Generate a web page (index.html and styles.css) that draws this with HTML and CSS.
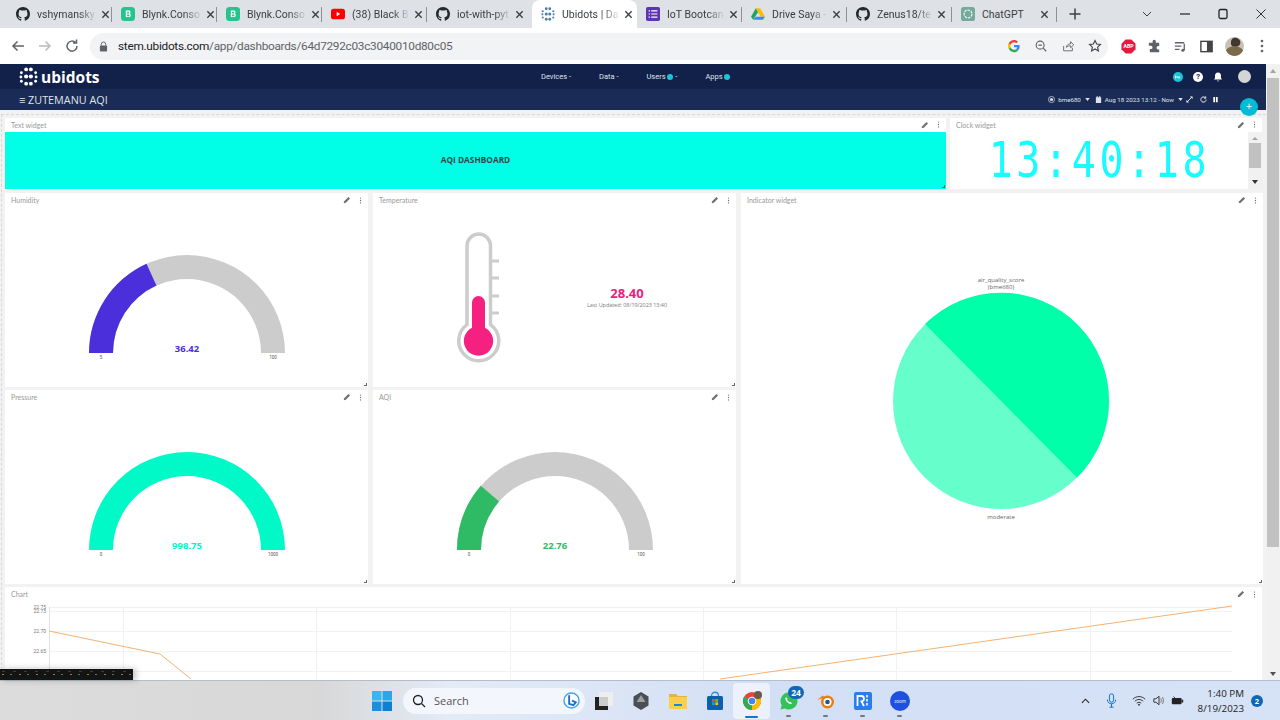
FILE: index.html
```html
<!DOCTYPE html>
<html lang="en">
<head>
  <meta charset="UTF-8" />
  <title>Ubidots | Dashboard</title>
  <link rel="stylesheet" href="styles.css">
</head>
<body>
  <svg class="defs" width="0" height="0">
    <symbol id="gh" viewBox="0 0 16 16"><path d="M8 0C3.58 0 0 3.58 0 8c0 3.54 2.29 6.53 5.47 7.59.4.07.55-.17.55-.38 0-.19-.01-.82-.01-1.49-2.01.37-2.53-.49-2.69-.94-.09-.23-.48-.94-.82-1.13-.28-.15-.68-.52-.01-.53.63-.01 1.08.58 1.23.82.72 1.21 1.87.87 2.33.66.07-.52.28-.87.51-1.07-1.78-.2-3.64-.89-3.64-3.95 0-.87.31-1.59.82-2.15-.08-.2-.36-1.02.08-2.12 0 0 .67-.21 2.2.82.64-.18 1.32-.27 2-.27.68 0 1.36.09 2 .27 1.53-1.04 2.2-.82 2.2-.82.44 1.1.16 1.92.08 2.12.51.56.82 1.27.82 2.15 0 3.07-1.87 3.75-3.65 3.95.29.25.54.73.54 1.48 0 1.07-.01 1.93-.01 2.2 0 .21.15.46.55.38A8.013 8.013 0 0016 8c0-4.42-3.58-8-8-8z" fill="#24292e"/></symbol>
    <symbol id="blynk" viewBox="0 0 16 16"><rect width="16" height="16" rx="4" fill="#23c48e"/><path d="M5.5 4h3.2c1.5 0 2.2.8 2.2 1.9 0 .8-.4 1.3-1 1.6.8.2 1.3.9 1.3 1.8 0 1.4-1 2.2-2.5 2.2H5.5zM7 5.3v2h1.4c.6 0 1-.4 1-1s-.4-1-1-1zM7 8.5v2.2h1.6c.7 0 1.1-.4 1.1-1.1s-.4-1.1-1.1-1.1z" fill="#fff"/></symbol>
    <symbol id="close" viewBox="0 0 10 10"><path d="M1.5 1.5l7 7M8.5 1.5l-7 7" stroke="#3c4043" stroke-width="1.5" fill="none"/></symbol>
    <symbol id="pencil" viewBox="0 0 10 10"><path d="M1 9l.5-2.5L6.8 1.2l2 2L3.5 8.500z" fill="#707070"/></symbol>
    <symbol id="dots" viewBox="0 0 4 10"><circle cx="2" cy="1.5" r=".9" fill="#707070"/><circle cx="2" cy="5" r=".9" fill="#707070"/><circle cx="2" cy="8.5" r=".9" fill="#707070"/></symbol>
    <symbol id="ubi" viewBox="0 0 20 20"><g fill="currentColor"><circle cx="7.5" cy="2.5" r="2"/><circle cx="12.5" cy="2.5" r="2"/><circle cx="2.5" cy="6" r="1.5"/><circle cx="17.5" cy="6" r="1.5"/><circle cx="2" cy="10.500" r="1.500"/><circle cx="7.500" cy="10" r="2.200"/><circle cx="12.500" cy="10" r="2.200"/><circle cx="18" cy="10.500" r="1.500"/><circle cx="2.500" cy="15" r="1.500"/><circle cx="17.500" cy="15" r="1.500"/><circle cx="7.500" cy="17.500" r="2"/><circle cx="12.500" cy="17.500" r="2"/></g></symbol>
  </svg>

  <div class="tabstrip">
    <div class="tab"><svg class="fav"><use href="#gh"/></svg><span class="tab-title">vshymansky</span><svg class="tab-x"><use href="#close"/></svg></div>
    <div class="tab"><svg class="fav"><use href="#blynk"/></svg><span class="tab-title">Blynk.Conso</span><svg class="tab-x"><use href="#close"/></svg></div>
    <div class="tab"><svg class="fav"><use href="#blynk"/></svg><span class="tab-title">Blynk.Conso</span><svg class="tab-x"><use href="#close"/></svg></div>
    <div class="tab"><svg class="fav" viewBox="0 0 16 16"><rect y="2" width="16" height="12" rx="3" fill="#f00"/><path d="M6.500 5.500v5l4-2.500z" fill="#fff"/></svg><span class="tab-title">(38) Black B</span><svg class="tab-x"><use href="#close"/></svg></div>
    <div class="tab"><svg class="fav"><use href="#gh"/></svg><span class="tab-title">iot-with-pyt</span><svg class="tab-x"><use href="#close"/></svg></div>
    <div class="tab active"><svg class="fav ubi-fav"><use href="#ubi"/></svg><span class="tab-title">Ubidots | Da</span><svg class="tab-x"><use href="#close"/></svg></div>
    <div class="tab"><svg class="fav" viewBox="0 0 16 16"><rect width="16" height="16" rx="2" fill="#5e35b1"/><path d="M3 4.500h1.500M6 4.500h7M3 8h1.500M6 8h7M3 11.500h1.500M6 11.500h7" stroke="#fff" stroke-width="1.300"/></svg><span class="tab-title">IoT Bootcan</span><svg class="tab-x"><use href="#close"/></svg></div>
    <div class="tab"><svg class="fav" viewBox="0 0 16 16"><path d="M5.500 1.500h5L16 11h-5z" fill="#fbbc04"/><path d="M5.500 1.500L0 11l2.500 3.500L8 6z" fill="#1fa463"/><path d="M2.500 14.500h11L16 11H5.500z" fill="#4285f4"/></svg><span class="tab-title">Drive Saya -</span><svg class="tab-x"><use href="#close"/></svg></div>
    <div class="tab"><svg class="fav"><use href="#gh"/></svg><span class="tab-title">Zenus18/te</span><svg class="tab-x"><use href="#close"/></svg></div>
    <div class="tab"><svg class="fav" viewBox="0 0 16 16"><rect width="16" height="16" rx="3" fill="#74aa9c"/><circle cx="8" cy="8" r="4.500" fill="none" stroke="#fff" stroke-width="1.200" stroke-dasharray="3 1"/></svg><span class="tab-title plain">ChatGPT</span><svg class="tab-x"><use href="#close"/></svg></div>
    <svg class="new-tab" viewBox="0 0 12 12"><path d="M6 .5v11M.5 6h11" stroke="#3c4043" stroke-width="1.500"/></svg>
    <div class="win-btns">
      <svg viewBox="0 0 12 12"><path d="M2 4l4 4 4-4" stroke="#3c4043" fill="none"/></svg>
      <svg viewBox="0 0 12 12"><path d="M1 6h10" stroke="#222" stroke-width="1.200"/></svg>
      <svg viewBox="0 0 12 12"><rect x="2" y="1.500" width="8" height="9" rx="1.500" fill="none" stroke="#222" stroke-width="1.300"/></svg>
      <svg viewBox="0 0 12 12"><path d="M1.500 1.500l9 9M10.500 1.500l-9 9" stroke="#333"/></svg>
    </div>
  </div>

  <div class="toolbar">
    <svg class="tb-ico" viewBox="0 0 16 16"><path d="M14 8H3M7.500 3.500L3 8l4.500 4.500" stroke="#5f6368" stroke-width="1.500" fill="none"/></svg>
    <svg class="tb-ico" viewBox="0 0 16 16"><path d="M2 8h11M8.500 3.500L13 8l-4.500 4.500" stroke="#b9bcc0" stroke-width="1.500" fill="none"/></svg>
    <svg class="tb-ico" viewBox="0 0 16 16"><path d="M13 8a5 5 0 1 1-1.500-3.500M12.500 1.500v3.500H9" stroke="#5f6368" stroke-width="1.500" fill="none"/></svg>
    <div class="omnibox">
      <svg class="lock" viewBox="0 0 10 12"><path d="M2.500 5V3.500a2.500 2.500 0 0 1 5 0V5" stroke="#5f6368" fill="none"/><rect x="1" y="5" width="8" height="6.500" rx="1" fill="#5f6368"/></svg>
      <span class="url"><b>stem.ubidots.com</b>/app/dashboards/64d7292c03c3040010d80c05</span>
      <div class="omni-right">
        <svg viewBox="0 0 16 16"><path d="M14.500 8.200c0-.5 0-1-.1-1.400H8v2.700h3.700c-.2.900-.7 1.600-1.400 2.100l2.200 1.700c1.300-1.200 2-3 2-5.100z" fill="#4285f4"/><path d="M8 15c1.900 0 3.400-.6 4.500-1.700l-2.200-1.700c-.6.400-1.400.7-2.300.7-1.800 0-3.300-1.200-3.800-2.800L1.900 11.200C3 13.500 5.300 15 8 15z" fill="#34a853"/><path d="M4.200 9.500C4 9 4 8.500 4 8s.1-1 .2-1.500L1.900 4.800C1.300 5.800 1 6.900 1 8s.3 2.200.9 3.200z" fill="#fbbc04"/><path d="M8 3.800c1 0 1.900.4 2.600 1l1.900-1.900C11.400 1.700 9.900 1 8 1 5.300 1 3 2.500 1.900 4.800l2.300 1.700C4.700 5 6.200 3.800 8 3.800z" fill="#ea4335"/></svg>
        <svg viewBox="0 0 16 16"><circle cx="7" cy="7" r="4.500" stroke="#5f6368" stroke-width="1.300" fill="none"/><path d="M10.500 10.500l3.500 3.500M5 7h4" stroke="#5f6368" stroke-width="1.300"/></svg>
        <svg viewBox="0 0 16 16"><path d="M3 8v5.500h10V10M6 9.500c.5-2.500 2.500-4 5-4V3l3.500 3.700L11 10V7.800c-2 0-3.800.4-5 1.700z" stroke="#5f6368" fill="none"/></svg>
        <svg viewBox="0 0 16 16"><path d="M8 1.800l1.900 4 4.300.5-3.200 3 .9 4.300L8 11.400l-3.900 2.200.9-4.300-3.200-3 4.300-.5z" stroke="#444" stroke-width="1.300" fill="none"/></svg>
      </div>
    </div>
    <div class="ext">
      <svg viewBox="0 0 16 16"><path d="M5 .5h6L15.500 5v6L11 15.500H5L.5 11V5z" fill="#e8173f"/><text x="8" y="10" class="abp">ABP</text></svg>
      <svg viewBox="0 0 16 16"><path d="M6 2.500a1.700 1.700 0 0 1 3.400 0V4H13v3.500h-1a1.800 1.800 0 0 0 0 3.600h1V14H3v-3.300h1.200a1.700 1.700 0 0 0 0-3.400H2V4h4z" fill="#5f6368"/></svg>
      <svg viewBox="0 0 16 16"><path d="M2 4h10M2 7.500h7M2 11h5M12 5v7" stroke="#5f6368" stroke-width="1.400" fill="none"/><circle cx="10.500" cy="12" r="1.600" fill="#5f6368"/></svg>
      <svg viewBox="0 0 16 16"><rect x="2" y="2.500" width="12" height="11" fill="none" stroke="#444" stroke-width="1.500"/><rect x="8.500" y="2.500" width="5.500" height="11" fill="#444"/></svg>
      <svg class="me" viewBox="0 0 20 20"><circle cx="10" cy="10" r="10" fill="#c9c2b4"/><path d="M9 1c4-1 8 2 7 6-1 3-5 4-8 3-3-2-2-8 1-9z" fill="#43362c"/><path d="M1 14c3-5 14-6 18 0-2 4-5 6-9 6s-7-2-9-6z" fill="#7a6a4a"/></svg>
      <svg class="kebab" viewBox="0 0 4 14"><circle cx="2" cy="2" r="1.300" fill="#5f6368"/><circle cx="2" cy="7" r="1.300" fill="#5f6368"/><circle cx="2" cy="12" r="1.300" fill="#5f6368"/></svg>
    </div>
  </div>

  <div class="viewport">
    <div class="app">
      <div class="nav">
        <div class="brand"><svg class="brand-ico"><use href="#ubi"/></svg><span>ubidots</span></div>
        <div class="menu">
          <span>Devices -</span><span>Data -</span><span>Users <i class="dot"></i> -</span><span>Apps <i class="dot"></i></span>
        </div>
        <div class="nav-right">
          <svg class="nav-ico" viewBox="0 0 10 10"><circle cx="5" cy="5" r="5" fill="#1cc4d8"/><path d="M2.500 3.500v3M2.500 5H7M6 5v1.500" stroke="#fff" stroke-width=".9" fill="none"/></svg>
          <i class="round help">?</i>
          <svg class="bell" viewBox="0 0 10 10"><path d="M5 .5c2 0 3 1.500 3 3.500v2l1 1.500H1L2 6V4C2 2 3 .5 5 .5zM4 8.500h2L5 9.700z" fill="#fff"/></svg>
          <i class="round user"></i>
        </div>
      </div>
      <div class="subnav">
        <span class="dash-name">≡ ZUTEMANU AQI</span>
        <div class="sub-right">
          <svg class="sub-ico" viewBox="0 0 8 8"><circle cx="4" cy="4" r="3.500" fill="none" stroke="#dfe3ec" stroke-width=".8"/><circle cx="4" cy="4" r="1.800" fill="#dfe3ec"/></svg>
          <span class="sub-device">bme680</span>
          <svg class="sub-caret" viewBox="0 0 6 4"><path d="M0 0h6L3 4z" fill="#dfe3ec"/></svg>
          <svg class="sub-ico sub-cal" viewBox="0 0 8 8"><path d="M1 1.500h6V8H1zM2 0h1v2H2zM5 0h1v2H5z" fill="#dfe3ec"/></svg>
          <span>Aug 18 2023 13:12 - Now</span>
          <svg class="sub-caret" viewBox="0 0 6 4"><path d="M0 0h6L3 4z" fill="#dfe3ec"/></svg>
          <svg class="sub-ico sub-expand" viewBox="0 0 8 8"><path d="M4.500 0.500h3v3zM3.500 7.500h-3v-3z" fill="#fff"/><path d="M6 2L2 6" stroke="#fff"/></svg>
          <svg class="sub-ico sub-gap" viewBox="0 0 8 8"><path d="M7 4a3 3 0 1 1-1-2.200M6.500.5v2H4.500" stroke="#fff" fill="none"/></svg>
          <svg class="sub-ico sub-pause" viewBox="0 0 8 8"><path d="M1.500 1h2v6h-2zM4.500 1h2v6h-2z" fill="#fff"/></svg>
        </div>
      </div>
      <button class="fab">+</button>

      <div class="dashboard">
        <div class="row-top">
          <div class="card card-text">
            <div class="card-head"><span>Text widget</span><div class="tools"><svg class="pen"><use href="#pencil"/></svg><svg class="more"><use href="#dots"/></svg></div></div>
            <div class="banner">AQI DASHBOARD</div>
            <i class="grip"></i>
          </div>
          <div class="card card-clock">
            <div class="card-head"><span>Clock widget</span><div class="tools"><svg class="pen"><use href="#pencil"/></svg><svg class="more"><use href="#dots"/></svg></div></div>
            <div class="clock-body">
              <div class="clock-wrap"><span class="clock">13:40:18</span></div>
              <div class="mini-scroll"><i class="up"></i><i class="thumb"></i><i class="down"></i></div>
            </div>
          </div>
        </div>

        <div class="row-mid">
          <div class="gauges">
            <div class="card">
              <div class="card-head"><span>Humidity</span><div class="tools"><svg class="pen"><use href="#pencil"/></svg><svg class="more"><use href="#dots"/></svg></div></div>
              <svg class="gauge" viewBox="0 0 363 178">
                <path class="arc-bg" d="M84 144A98 98 0 0 1 280 144H256A74 74 0 0 0 108 144Z"/>
                <path fill="#4a2fdb" d="M84 144A98 98 0 0 1 141.500 54.700L151.400 76.600A74 74 0 0 0 108 144Z"/>
                <text class="g-val" x="182" y="143" fill="#4a2fdb">36.42</text>
                <text class="g-lim" x="96" y="150">5</text><text class="g-lim" x="268" y="150">100</text>
              </svg>
              <i class="grip"></i>
            </div>
            <div class="card">
              <div class="card-head"><span>Temperature</span><div class="tools"><svg class="pen"><use href="#pencil"/></svg><svg class="more"><use href="#dots"/></svg></div></div>
              <svg class="gauge" viewBox="0 0 363 178">
                <path d="M119 52h7M119 69h7M119 87h7M119 104h7" stroke="#ccc" stroke-width="3"/>
                <path d="M94 115.600V36.750a11.750 11.750 0 0 1 23.500 0V115.600a20 20 0 1 1-23.500 0Z" fill="#fff" stroke="#ccc" stroke-width="3.500"/>
                <path d="M99 118.800V93.500a6.500 6.500 0 0 1 13 0V118.800a14.700 14.700 0 1 1-13 0Z" fill="#f5207f"/>
                <text class="t-val" x="254" y="89">28.40</text>
                <text class="t-sub" x="254" y="98">Last Updated: 08/19/2023 13:40</text>
              </svg>
              <i class="grip"></i>
            </div>
            <div class="card">
              <div class="card-head"><span>Pressure</span><div class="tools"><svg class="pen"><use href="#pencil"/></svg><svg class="more"><use href="#dots"/></svg></div></div>
              <svg class="gauge" viewBox="0 0 363 178">
                <path fill="#00f9c6" d="M84 144A98 98 0 0 1 280 144H256A74 74 0 0 0 108 144Z"/>
                <text class="g-val" x="182" y="143" fill="#00f9c6">998.75</text>
                <text class="g-lim" x="96" y="150">0</text><text class="g-lim" x="268" y="150">1000</text>
              </svg>
              <i class="grip"></i>
            </div>
            <div class="card">
              <div class="card-head"><span>AQI</span><div class="tools"><svg class="pen"><use href="#pencil"/></svg><svg class="more"><use href="#dots"/></svg></div></div>
              <svg class="gauge" viewBox="0 0 363 178">
                <path class="arc-bg" d="M84 144A98 98 0 0 1 280 144H256A74 74 0 0 0 108 144Z"/>
                <path fill="#2fbb66" d="M84 144A98 98 0 0 1 107.800 79.700L126.100 95.500A74 74 0 0 0 108 144Z"/>
                <text class="g-val" x="182" y="143" fill="#2fbb66">22.76</text>
                <text class="g-lim" x="96" y="150">0</text><text class="g-lim" x="268" y="150">100</text>
              </svg>
              <i class="grip"></i>
            </div>
          </div>
          <div class="card card-pie">
            <div class="card-head"><span>Indicator widget</span><div class="tools"><svg class="pen"><use href="#pencil"/></svg><svg class="more"><use href="#dots"/></svg></div></div>
            <svg class="pie" viewBox="0 0 522 375">
              <circle cx="260" cy="194" r="108" fill="#66ffcc"/>
              <path d="M184 117A108 108 0 0 1 336 270.500Z" fill="#00ffa9"/>
              <text class="pie-txt" x="260" y="75">air_quality_score</text>
              <text class="pie-txt" x="260" y="82">(bme680)</text>
              <text class="pie-txt" x="260" y="312">moderate</text>
            </svg>
            <i class="grip"></i>
          </div>
        </div>

        <div class="card card-chart">
          <div class="card-head"><span>Chart</span><div class="tools"><svg class="pen"><use href="#pencil"/></svg><svg class="more"><use href="#dots"/></svg></div></div>
          <svg class="chart" viewBox="0 0 1257 80">
            <g stroke="#f2f2f2" shape-rendering="crispEdges">
              <path d="M44 6H1227M44 10H1227M44 30H1227M44 50H1227M44 70H1227"/>
              <path d="M118 6V80M311 6V80M505 6V80M698 6V80M891 6V80M1085 6V80"/>
            </g>
            <path d="M44 6V80" stroke="#e2e2e2" shape-rendering="crispEdges"/>
            <path d="M44 30L155 53L186 78M715 78L1227 5" stroke="#f3b274" fill="none"/>
            <text class="axis" x="41" y="8">22.75</text>
            <text class="axis" x="41" y="12">22.73</text>
            <text class="axis" x="41" y="32">22.70</text>
            <text class="axis" x="41" y="52">22.65</text>
          </svg>
        </div>
      </div>
    </div>
    <div class="page-scroll"><i class="ps-up"></i><i class="ps-thumb"></i><i class="ps-down"></i></div>
    <div class="stray-thumb"></div>
  </div>

  <div class="taskbar">
    <svg class="start" viewBox="0 0 20 20"><g fill="#1a9be6"><rect width="9.500" height="9.500" fill="#38b5f2"/><rect x="10.500" width="9.500" height="9.500" fill="#2aa6ec"/><rect y="10.500" width="9.500" height="9.500" fill="#1a8fdf"/><rect x="10.500" y="10.500" width="9.500" height="9.500" fill="#0f7fd4"/></g></svg>
    <div class="search">
      <svg viewBox="0 0 14 14"><circle cx="6" cy="6" r="4.500" fill="none" stroke="#222" stroke-width="1.300"/><path d="M9.500 9.500l3.500 3.500" stroke="#222" stroke-width="1.300"/></svg>
      <span>Search</span>
      <svg class="bing" viewBox="0 0 18 18"><circle cx="9" cy="9" r="8" fill="#fff" stroke="#4aa3e8" stroke-width="1.500"/><path d="M6.500 3.500v9l4.500 1.500 2.500-3-4-2" fill="none" stroke="#1b70c9" stroke-width="2"/></svg>
    </div>
    <div class="apps">
      <div class="app-ico"><svg viewBox="0 0 20 20"><rect x="5" y="1" width="14" height="14" fill="#eee"/><rect x="1" y="6" width="13" height="13" fill="#222"/><rect x="5" y="6" width="9" height="9" fill="#ccc"/></svg></div>
      <div class="app-ico"><svg viewBox="0 0 20 20"><path d="M10 1l7.500 4.500v9L10 19l-7.500-4.500v-9z" fill="#4a4f55"/><path d="M10 4l4.500 7h-9z" fill="#9aa0a6"/></svg></div>
      <div class="app-ico"><svg viewBox="0 0 20 20"><path d="M1 3h7l2 2h9v3H1z" fill="#e8b33a"/><rect x="1" y="6" width="18" height="12" fill="#fbcf4b"/><rect x="6" y="13" width="8" height="2" fill="#1a86d8"/></svg></div>
      <div class="app-ico"><svg viewBox="0 0 20 20"><rect x="2" y="5" width="16" height="14" rx="1.500" fill="#0c5fa8"/><path d="M6.500 5c0-5 7-5 7 0" fill="none" stroke="#2a8fd8" stroke-width="1.300"/><rect x="7" y="8" width="2.800" height="2.800" fill="#f25022"/><rect x="10.300" y="8" width="2.800" height="2.800" fill="#7fba00"/><rect x="7" y="11.300" width="2.800" height="2.800" fill="#00a4ef"/><rect x="10.300" y="11.300" width="2.800" height="2.800" fill="#ffb900"/></svg></div>
      <div class="app-ico on"><svg viewBox="0 0 20 20"><circle cx="10" cy="10" r="9" fill="#ea4335"/><path d="M10 10L17.800 5.500A9 9 0 0 1 10 19z" fill="#fbbc04"/><path d="M10 10V19A9 9 0 0 1 2.200 5.500z" fill="#34a853"/><circle cx="10" cy="10" r="4.300" fill="#fff"/><circle cx="10" cy="10" r="3.300" fill="#4285f4"/><circle cx="16" cy="4" r="4" fill="#6b5a4a"/></svg></div>
      <div class="app-ico run"><svg viewBox="0 0 20 20"><path d="M10 1.500a8.500 8.500 0 0 0-7.300 12.800L1.500 18.500l4.300-1.100A8.500 8.500 0 1 0 10 1.500z" fill="#33c25a"/><path d="M7 6c-1 1-1 3 1 5s4 2.500 5 1.500l-1.500-1.800-1.200.6-2.300-2.300.6-1.200z" fill="#fff"/></svg><b class="badge">24</b></div>
      <div class="app-ico run"><svg viewBox="0 0 20 20"><circle cx="11.500" cy="11" r="6.500" fill="#e87d0d"/><circle cx="11.500" cy="11" r="4" fill="#fff"/><circle cx="11.500" cy="11" r="2.300" fill="#265787"/><path d="M1 9l6-4.500 1.500 2z" fill="#e87d0d"/></svg></div>
      <div class="app-ico run"><svg viewBox="0 0 20 20"><rect x="1" y="1" width="18" height="18" rx="2" fill="#2b7de9"/><path d="M4.500 15V5h3.500a2.700 2.700 0 0 1 .5 5.400L11 15" stroke="#fff" stroke-width="1.800" fill="none"/><path d="M14 4v12" stroke="#cfe3fb" stroke-width="2" stroke-dasharray="2.500 1.500"/></svg></div>
      <div class="app-ico run"><svg viewBox="0 0 20 20"><circle cx="10" cy="10" r="10" fill="#1f4fe0"/><text x="10" y="12" class="zoom-txt">zoom</text></svg></div>
    </div>
    <div class="tray">
      <svg class="t-chev" viewBox="0 0 10 6"><path d="M1 5l4-4 4 4" stroke="#222" stroke-width="1.200" fill="none"/></svg>
      <svg class="t-mic" viewBox="0 0 12 18"><rect x="3.500" y="1" width="5" height="10" rx="2.500" fill="none" stroke="#1673c9" stroke-width="1.200"/><path d="M1 8a5 5 0 0 0 10 0M6 13v4M3.500 17h5" stroke="#1673c9" stroke-width="1.200" fill="none"/></svg>
      <svg class="t-wifi" viewBox="0 0 16 12"><path d="M1 4.500c4-4 10-4 14 0M3.200 6.800c3-2.600 6.600-2.600 9.600 0M5.400 9c1.600-1.300 3.600-1.300 5.200 0" stroke="#222" fill="none"/><circle cx="8" cy="10.800" r="1" fill="#222"/></svg>
      <svg class="t-vol" viewBox="0 0 14 12"><path d="M1 4h2.500L7 1v10L3.500 8H1z" fill="none" stroke="#222"/><path d="M9 3.500c1 1.500 1 3.500 0 5M11 2c1.500 2.500 1.500 5.500 0 8" stroke="#666" fill="none"/></svg>
      <svg class="t-bat" viewBox="0 0 16 12"><rect x="1" y="3" width="12" height="7.500" rx="1" fill="#222"/><rect x="13" y="5" width="2" height="3.500" fill="#222"/><path d="M3 1l3 3-2 1" stroke="#222" fill="none"/></svg>
      <div class="time"><span>1:40 PM</span><span>8/19/2023</span></div>
      <b class="notif">2</b>
    </div>
  </div>
</body>
</html>
```

FILE: styles.css
```css
* {
  box-sizing: border-box;
}

html, body {
  margin: 0;
  height: 720px;
  overflow: hidden;
}

body {
  font-family: "Roboto", sans-serif;
  display: flex;
  flex-direction: column;
  background: #fff;
}

i, b {
  font-style: normal;
}

.defs {
  position: absolute;
}

/* browser chrome */
.tabstrip {
  height: 28px;
  flex: none;
  display: flex;
  align-items: center;
  background: #dee1e6;
  padding-left: 7px;
}

.tab {
  width: 105px;
  height: 28px;
  flex: none;
  display: flex;
  align-items: center;
  padding: 0 8px 0 9px;
  font-size: 10.500px;
  color: #3c4043;
  position: relative;
}

.tab::after {
  content: "";
  position: absolute;
  right: 0;
  top: 7px;
  height: 15px;
  border-right: 1px solid #8e9196;
}

.tab.active {
  background: #fff;
  border-radius: 8px 8px 0 0;
}

.tab.active::after,
.tab:nth-child(5)::after {
  display: none;
}

.fav {
  width: 14px;
  height: 14px;
  flex: none;
  margin-right: 7px;
}

.ubi-fav {
  color: #4a7fb0;
}

.tab-title {
  flex: 1;
  white-space: nowrap;
  -webkit-mask-image: linear-gradient(90deg, #000 72%, rgba(0, 0, 0, .12));
  mask-image: linear-gradient(90deg, #000 72%, rgba(0, 0, 0, .12));
}

.tab-title.plain {
  -webkit-mask-image: none;
  mask-image: none;
}

.tab-x {
  width: 9px;
  height: 9px;
  flex: none;
  margin-left: 6px;
}

.new-tab {
  width: 12px;
  height: 12px;
  margin-left: 12px;
}

.win-btns {
  margin-left: auto;
  display: flex;
  gap: 26px;
  padding-right: 13px;
}

.win-btns svg {
  width: 12px;
  height: 12px;
}

.toolbar {
  height: 36px;
  flex: none;
  display: flex;
  align-items: center;
  background: #fff;
  padding-left: 10px;
}

.tb-ico {
  width: 16px;
  height: 16px;
  margin-right: 11px;
}

.omnibox {
  width: 1018px;
  height: 27px;
  margin-left: -1px;
  border-radius: 14px;
  background: #f1f3f4;
  display: flex;
  align-items: center;
  padding: 0 6px 0 9px;
}

.lock {
  width: 9px;
  height: 11px;
  margin-right: 10px;
}

.url {
  font-size: 11.800px;
  letter-spacing: -.27px;
  color: #5f6368;
}

.url b {
  font-weight: 400;
  color: #202124;
}

.omni-right {
  margin-left: auto;
  display: flex;
  gap: 13px;
}

.omni-right svg {
  width: 14px;
  height: 14px;
}

.ext {
  display: flex;
  align-items: center;
  margin-left: 13px;
  gap: 11px;
}

.ext svg {
  width: 15px;
  height: 15px;
}

.ext .me {
  width: 19px;
  height: 19px;
}

.ext .kebab {
  width: 4px;
  height: 14px;
  margin-left: 5px;
}

.abp {
  font: 700 5.500px "Roboto", sans-serif;
  fill: #fff;
  text-anchor: middle;
}

/* page */
.viewport {
  height: 616px;
  flex: none;
  display: flex;
  position: relative;
}

.app {
  width: 1266px;
  flex: none;
  position: relative;
  display: flex;
  flex-direction: column;
  background: #f2f2f2;
  overflow: hidden;
}

.nav {
  height: 25px;
  flex: none;
  background: #11214a;
  color: #fff;
  display: flex;
  align-items: center;
  padding-left: 19px;
}

.brand {
  width: 522px;
  display: flex;
  align-items: center;
  gap: 3px;
  font: 700 15.500px "Open Sans", sans-serif;
}

.brand-ico {
  width: 19px;
  height: 19px;
  color: #fff;
}

.menu {
  display: flex;
  gap: 28px;
  font-size: 7.500px;
  color: #dfe3ec;
}

.dot {
  display: inline-block;
  width: 6px;
  height: 6px;
  border-radius: 50%;
  background: #1cc4d8;
  vertical-align: -1px;
}

.nav-right {
  margin-left: auto;
  display: flex;
  align-items: center;
  gap: 10px;
  padding-right: 15px;
}

.nav-ico {
  width: 10px;
  height: 10px;
}

.round {
  display: block;
  width: 10px;
  height: 10px;
  border-radius: 50%;
  background: #fff;
}

.round.help {
  font: 700 7.500px/10px "Roboto", sans-serif;
  color: #11214a;
  text-align: center;
}

.round.user {
  width: 13px;
  height: 13px;
  margin-left: 5px;
  background: #d5d5d5;
}

.bell {
  width: 10px;
  height: 10px;
}

.subnav {
  height: 21px;
  flex: none;
  background: #1a2c56;
  color: #dfe3ec;
  display: flex;
  align-items: center;
  padding: 0 47px 0 19px;
}

.dash-name {
  font: 400 10.800px "Open Sans", sans-serif;
}

.sub-right {
  margin-left: auto;
  display: flex;
  align-items: center;
  font-size: 6.200px;
}

.sub-ico {
  width: 7px;
  height: 7px;
}

.sub-device {
  margin-left: 3px;
}

.sub-caret {
  width: 5px;
  height: 3px;
  margin-left: 4px;
}

.sub-cal {
  margin: 0 3px 0 5px;
}

.sub-expand {
  margin-left: 3px;
}

.sub-gap {
  margin-left: 7px;
}

.sub-pause {
  margin-left: 5px;
}

.fab {
  position: absolute;
  left: 1240px;
  top: 34px;
  width: 18px;
  height: 18px;
  padding: 0;
  border: none;
  border-radius: 50%;
  background: #00bcd4;
  color: #fff;
  font-size: 10px;
  line-height: 18px;
  z-index: 2;
}

.dashboard {
  flex: 1;
  display: flex;
  flex-direction: column;
  gap: 4px;
  padding: 8px 4px 0 5px;
  position: relative;
  overflow: hidden;
}

.dashboard::before {
  content: "";
  position: absolute;
  left: 1px;
  right: 0;
  top: 4px;
  bottom: 0;
  border-top: 1px dashed #d8d8d8;
  border-left: 1px dashed #d8d8d8;
}

.row-top {
  display: flex;
  gap: 4px;
  height: 71px;
  flex: none;
  position: relative;
}

.card {
  background: #fff;
  position: relative;
}

.card-head {
  height: 14px;
  display: flex;
  align-items: center;
  justify-content: space-between;
  padding: 0 6px 0 6px;
  font: 400 7px "Lato", sans-serif;
  color: #999;
}

.row-top .card-head {
  padding-bottom: 1px;
}

.tools {
  display: flex;
  align-items: center;
  gap: 8px;
}

.pen {
  width: 8px;
  height: 8px;
}

.more {
  width: 3px;
  height: 7px;
}

.card-text {
  width: 941px;
}

.banner {
  height: 57px;
  padding-bottom: 2px;
  background: #00ffe6;
  display: flex;
  align-items: center;
  justify-content: center;
  font: 700 8.300px "Open Sans", sans-serif;
  color: #35464a;
}

.card-clock {
  flex: 1;
}

.clock-body {
  display: flex;
  height: 57px;
}

.clock-wrap {
  flex: 1;
  display: flex;
  justify-content: center;
}

.clock {
  display: block;
  height: 57px;
  font: 400 50px/57px "DejaVu Sans Mono", monospace;
  letter-spacing: 4.500px;
  color: #19fbff;
  transform: scaleX(.8);
}

.mini-scroll {
  width: 14px;
  display: flex;
  flex-direction: column;
  align-items: center;
  background: #f1f1f1;
}

.mini-scroll .thumb {
  width: 12px;
  height: 25px;
  background: #c1c1c1;
  margin: 3px 0 auto;
}

.mini-scroll .up,
.mini-scroll .down,
.ps-up,
.ps-down {
  width: 0;
  height: 0;
  border-left: 3px solid transparent;
  border-right: 3px solid transparent;
}

.mini-scroll .up {
  margin-top: 5px;
  border-bottom: 3px solid #a3a3a3;
}

.mini-scroll .down {
  margin-bottom: 5px;
  border-top: 4px solid #333;
}

.row-mid {
  display: flex;
  gap: 5px;
  height: 391px;
  flex: none;
  position: relative;
}

.gauges {
  width: 731px;
  display: grid;
  grid-template-columns: 363px 363px;
  grid-template-rows: 194px 194px;
  column-gap: 5px;
  row-gap: 3px;
  flex: none;
}

.gauge {
  display: block;
  width: 363px;
  height: 178px;
  margin-top: 2px;
}

.arc-bg {
  fill: #cccccc;
}

.g-val {
  font: 700 9.500px "Open Sans", sans-serif;
  text-anchor: middle;
}

.g-lim {
  font: 400 4.500px "Roboto", sans-serif;
  fill: #555;
  text-anchor: middle;
}

.t-val {
  font: 700 13px "Open Sans", sans-serif;
  fill: #ea2182;
  text-anchor: middle;
}

.t-sub {
  font: 400 5.400px "Open Sans", sans-serif;
  fill: #777;
  text-anchor: middle;
}

.grip {
  position: absolute;
  right: 1px;
  bottom: 1px;
  width: 3px;
  height: 3px;
  border-right: 1px solid #666;
  border-bottom: 1px solid #666;
}

.card-pie {
  flex: 1;
}

.pie {
  display: block;
  width: 522px;
  height: 375px;
}

.pie-txt {
  font: 400 6px "Open Sans", sans-serif;
  fill: #666;
  text-anchor: middle;
}

.card-chart {
  flex: none;
  height: 93px;
  margin-top: -1px;
}

.chart {
  display: block;
  width: 1257px;
  height: 80px;
}

.axis {
  font: 400 5px "Roboto", sans-serif;
  fill: #777;
  text-anchor: end;
}

.page-scroll {
  flex: 1;
  background: #f1f1f1;
  display: flex;
  flex-direction: column;
  align-items: center;
}

.ps-up {
  margin-top: 5px;
  border-bottom: 4px solid #a3a3a3;
}

.ps-thumb {
  width: 12px;
  height: 469px;
  margin: 5px 0 auto;
  background: #c1c1c1;
}

.ps-down {
  margin-bottom: 4px;
  border-top: 4px solid #505050;
}

/* piece of a dark window poking above the taskbar */
.stray-thumb {
  position: absolute;
  left: 0;
  bottom: 0;
  width: 133px;
  height: 11px;
  background: #141414;
  box-shadow: 3px 0 6px rgba(0, 0, 0, .25);
}

.stray-thumb::before,
.stray-thumb::after {
  content: "";
  position: absolute;
  left: 2px;
  right: 2px;
  height: 1px;
}

.stray-thumb::before {
  top: 2px;
  background: repeating-linear-gradient(90deg, #3d3d3d 0 3px, transparent 3px 11px);
}

.stray-thumb::after {
  top: 5px;
  background: repeating-linear-gradient(90deg, #8d8244 0 2px, transparent 2px 8px, #4a7f63 8px 10px, transparent 10px 17px);
}

/* windows taskbar */
.taskbar {
  height: 40px;
  flex: none;
  display: flex;
  align-items: center;
  padding-left: 372px;
  border-top: 1px solid #b5bccb;
  background: linear-gradient(90deg, #dcdcdc 0, #d8d8d8 25%, #e3ebf6 35%, #d3dff5 60%, #d6e2f6 100%);
}

.start {
  width: 20px;
  height: 20px;
}

.search {
  width: 182px;
  height: 26px;
  margin-left: 11px;
  padding: 0 5px 0 9px;
  border-radius: 13px;
  background: #f3f6fc;
  display: flex;
  align-items: center;
  gap: 8px;
  font: 400 11px "Open Sans", sans-serif;
  color: #555;
}

.search svg {
  width: 14px;
  height: 14px;
}

.search .bing {
  width: 17px;
  height: 17px;
  margin-left: auto;
}

.apps {
  display: flex;
  align-items: center;
}

.app-ico {
  width: 37px;
  height: 36px;
  display: flex;
  align-items: center;
  justify-content: center;
  position: relative;
}

.app-ico svg {
  width: 20px;
  height: 20px;
}

.app-ico.on {
  background: rgba(255, 255, 255, .55);
  border-radius: 4px;
}

.app-ico.on::after {
  content: "";
  position: absolute;
  left: 12px;
  right: 12px;
  bottom: 1px;
  height: 2px;
  border-radius: 1px;
  background: #1673c9;
}

.app-ico.run::after {
  content: "";
  position: absolute;
  left: 16px;
  right: 16px;
  bottom: 2px;
  height: 2px;
  border-radius: 1px;
  background: #777;
}

.badge {
  position: absolute;
  right: 3px;
  top: 3px;
  width: 16px;
  height: 13px;
  border-radius: 7px;
  background: #0f67b5;
  color: #fff;
  font: 700 8.500px/13px "Open Sans", sans-serif;
  text-align: center;
}

.zoom-txt {
  font: 400 4.500px "Open Sans", sans-serif;
  fill: #fff;
  text-anchor: middle;
}

.tray {
  margin-left: auto;
  display: flex;
  align-items: center;
  padding-right: 17px;
}

.t-chev {
  width: 9px;
  height: 6px;
}

.t-mic {
  width: 11px;
  height: 15px;
  margin-left: 16px;
}

.t-wifi {
  width: 14px;
  height: 11px;
  margin-left: 15px;
}

.t-vol {
  width: 12px;
  height: 11px;
  margin-left: 7px;
}

.t-bat {
  width: 13px;
  height: 11px;
  margin-left: 6px;
}

.time {
  width: 60px;
  display: flex;
  flex-direction: column;
  align-items: flex-end;
  gap: 2px;
  font: 400 9.800px "Open Sans", sans-serif;
  color: #222;
}

.notif {
  width: 12px;
  height: 12px;
  margin-left: 7px;
  border-radius: 50%;
  background: #0f67b5;
  color: #fff;
  font: 700 7.500px/12px "Open Sans", sans-serif;
  text-align: center;
}
```
